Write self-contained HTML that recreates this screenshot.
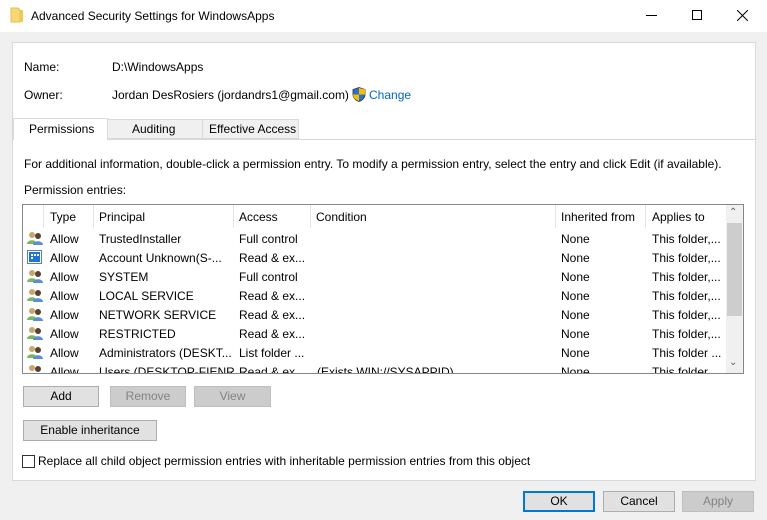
<!DOCTYPE html><html><head><style>
*{box-sizing:border-box;margin:0;padding:0}
body{width:767px;height:520px;background:#f0f0f0;font-family:"Liberation Sans",sans-serif;font-size:12px;color:#000;position:relative;overflow:hidden}
.a{position:absolute;white-space:nowrap}
.btn{position:absolute;background:#e1e1e1;border:1px solid #adadad;text-align:center;line-height:19px}
.dis{background:#cccccc;border-color:#bfbfbf;color:#838383}
.row{position:absolute;left:24px;width:702px;height:19px}
.row span{position:absolute;top:3px}
.hd{position:absolute;top:5px;color:#000}
.sep{position:absolute;top:0;width:1px;height:23px;background:#e5e5e5}
</style></head><body>
<div class="a" style="left:0;top:0;width:767px;height:32px;background:#fff"></div>
<svg class="a" style="left:10px;top:7px" width="14" height="16"><path d="M1 1h7l2 2v12H1z" fill="#f8d775" stroke="#e6bf50"/><path d="M10 3h3v12h-3z" fill="#f0c85a"/></svg>
<div class="a" style="left:31px;top:9px;font-size:12px">Advanced Security Settings for WindowsApps</div>
<div class="a" style="left:646px;top:15px;width:11px;height:1px;background:#000"></div>
<div class="a" style="left:692px;top:10px;width:10px;height:10px;border:1px solid #000"></div>
<svg class="a" style="left:737px;top:10px" width="11" height="11"><path d="M0 0L11 11M11 0L0 11" stroke="#000"/></svg>
<div class="a" style="left:12px;top:42px;width:744px;height:439px;background:#fff;border:1px solid #d9d9d9"></div>
<div class="a" style="left:24px;top:60px">Name:</div>
<div class="a" style="left:112px;top:60px">D:\WindowsApps</div>
<div class="a" style="left:24px;top:88px">Owner:</div>
<div class="a" style="left:112px;top:88px">Jordan DesRosiers (jordandrs1@gmail.com)</div>
<svg class="a" style="left:352px;top:87px" width="14" height="15"><path d="M7 0.5L13 2.5V7.5C13 11 10 13.5 7 14.5C4 13.5 1 11 1 7.5V2.5Z" fill="#2b6fd6" stroke="#333" stroke-width="0.8"/><path d="M7 1V7.5H13V2.5ZM1 7.5H7V14C4 13 1 11 1 7.5Z" fill="#f5c000"/></svg>
<div class="a" style="left:369px;top:88px;color:#0066cc">Change</div>
<div class="a" style="left:12px;top:139px;width:744px;height:1px;background:#d9d9d9"></div>
<div class="a" style="left:13px;top:118px;width:95px;height:22px;background:#fff;border:1px solid #d9d9d9;border-bottom:none"></div>
<div class="a" style="left:29px;top:122px">Permissions</div>
<div class="a" style="left:107px;top:119px;width:96px;height:20px;background:#f0f0f0;border:1px solid #d9d9d9"></div>
<div class="a" style="left:132px;top:122px">Auditing</div>
<div class="a" style="left:202px;top:119px;width:97px;height:20px;background:#f0f0f0;border:1px solid #d9d9d9"></div>
<div class="a" style="left:209px;top:122px">Effective Access</div>
<div class="a" style="left:24px;top:157px">For additional information, double-click a permission entry. To modify a permission entry, select the entry and click Edit (if available).</div>
<div class="a" style="left:24px;top:183px">Permission entries:</div>
<div class="a" style="left:22px;top:204px;width:722px;height:170px;border:1px solid #828790;background:#fff;overflow:hidden">
<div class="sep" style="left:20px"></div><div class="sep" style="left:70px"></div><div class="sep" style="left:210px"></div><div class="sep" style="left:287px"></div><div class="sep" style="left:532px"></div><div class="sep" style="left:622px"></div>
<div class="hd" style="left:27px">Type</div><div class="hd" style="left:76px">Principal</div><div class="hd" style="left:216px">Access</div><div class="hd" style="left:293px">Condition</div><div class="hd" style="left:538px">Inherited from</div><div class="hd" style="left:629px">Applies to</div>
<div class="a" style="left:703px;top:0;width:17px;height:168px;background:#f0f0f0"></div>
<div class="a" style="left:704px;top:18px;width:15px;height:93px;background:#cdcdcd"></div>
<div class="a" style="left:706px;top:2px;color:#606060;font-size:10px">&#8963;</div>
<div class="a" style="left:706px;top:152px;color:#606060;font-size:10px">&#8964;</div>
</div>
<svg width="0" height="0" style="position:absolute"><defs><g id="u"><circle cx="5" cy="4" r="3" fill="#c9a66b"/><path d="M0 13c0-5 10-5 10 0z" fill="#7bb661"/><circle cx="11" cy="5" r="3" fill="#5a4030"/><path d="M6 14c0-5 10-5 10 0z" fill="#5b8ed6"/></g></defs></svg>
<div class="row" style="top:229px"><svg class="a" style="left:3px;top:2px" width="16" height="15"><use href="#u"/></svg><span style="left:26px">Allow</span><span style="left:75px">TrustedInstaller</span><span style="left:215px">Full control</span><span style="left:537px">None</span><span style="left:628px">This folder,...</span></div>
<div class="row" style="top:248px"><svg class="a" style="left:3px;top:2px" width="15" height="14"><rect x="0.5" y="0.5" width="14" height="13" fill="#fff" stroke="#5a7fb0"/><rect x="2" y="2" width="11" height="10" fill="#1e74d0"/><path d="M4 4h2v2H4zM7 4h2v2H7zM10 4h2v2h-2zM4 7h2v2H4z" fill="#fff"/></svg><span style="left:26px">Allow</span><span style="left:75px">Account Unknown(S-...</span><span style="left:215px">Read &amp; ex...</span><span style="left:537px">None</span><span style="left:628px">This folder,...</span></div>
<div class="row" style="top:267px"><svg class="a" style="left:3px;top:2px" width="16" height="15"><use href="#u"/></svg><span style="left:26px">Allow</span><span style="left:75px">SYSTEM</span><span style="left:215px">Full control</span><span style="left:537px">None</span><span style="left:628px">This folder,...</span></div>
<div class="row" style="top:286px"><svg class="a" style="left:3px;top:2px" width="16" height="15"><use href="#u"/></svg><span style="left:26px">Allow</span><span style="left:75px">LOCAL SERVICE</span><span style="left:215px">Read &amp; ex...</span><span style="left:537px">None</span><span style="left:628px">This folder,...</span></div>
<div class="row" style="top:305px"><svg class="a" style="left:3px;top:2px" width="16" height="15"><use href="#u"/></svg><span style="left:26px">Allow</span><span style="left:75px">NETWORK SERVICE</span><span style="left:215px">Read &amp; ex...</span><span style="left:537px">None</span><span style="left:628px">This folder,...</span></div>
<div class="row" style="top:324px"><svg class="a" style="left:3px;top:2px" width="16" height="15"><use href="#u"/></svg><span style="left:26px">Allow</span><span style="left:75px">RESTRICTED</span><span style="left:215px">Read &amp; ex...</span><span style="left:537px">None</span><span style="left:628px">This folder,...</span></div>
<div class="row" style="top:343px"><svg class="a" style="left:3px;top:2px" width="16" height="15"><use href="#u"/></svg><span style="left:26px">Allow</span><span style="left:75px">Administrators (DESKT...</span><span style="left:215px">List folder ...</span><span style="left:537px">None</span><span style="left:628px">This folder ...</span></div>
<div class="row" style="top:362px;height:11px;overflow:hidden"><svg class="a" style="left:3px;top:2px" width="16" height="15"><use href="#u"/></svg><span style="left:26px">Allow</span><span style="left:75px">Users (DESKTOP-FIENR...</span><span style="left:215px">Read &amp; ex...</span><span style="left:293px">(Exists WIN://SYSAPPID)</span><span style="left:537px">None</span><span style="left:628px">This folder,...</span></div>
<div class="btn" style="left:23px;top:386px;width:76px;height:21px">Add</div>
<div class="btn dis" style="left:110px;top:386px;width:76px;height:21px">Remove</div>
<div class="btn dis" style="left:194px;top:386px;width:77px;height:21px">View</div>
<div class="btn" style="left:23px;top:420px;width:134px;height:21px">Enable inheritance</div>
<div class="a" style="left:22px;top:455px;width:13px;height:13px;border:1px solid #333;background:#fff"></div>
<div class="a" style="left:38px;top:454px">Replace all child object permission entries with inheritable permission entries from this object</div>
<div class="btn" style="left:523px;top:491px;width:72px;height:21px;border:2px solid #0078d7;line-height:17px">OK</div>
<div class="btn" style="left:603px;top:491px;width:72px;height:21px">Cancel</div>
<div class="btn dis" style="left:682px;top:491px;width:72px;height:21px">Apply</div>
</body></html>
